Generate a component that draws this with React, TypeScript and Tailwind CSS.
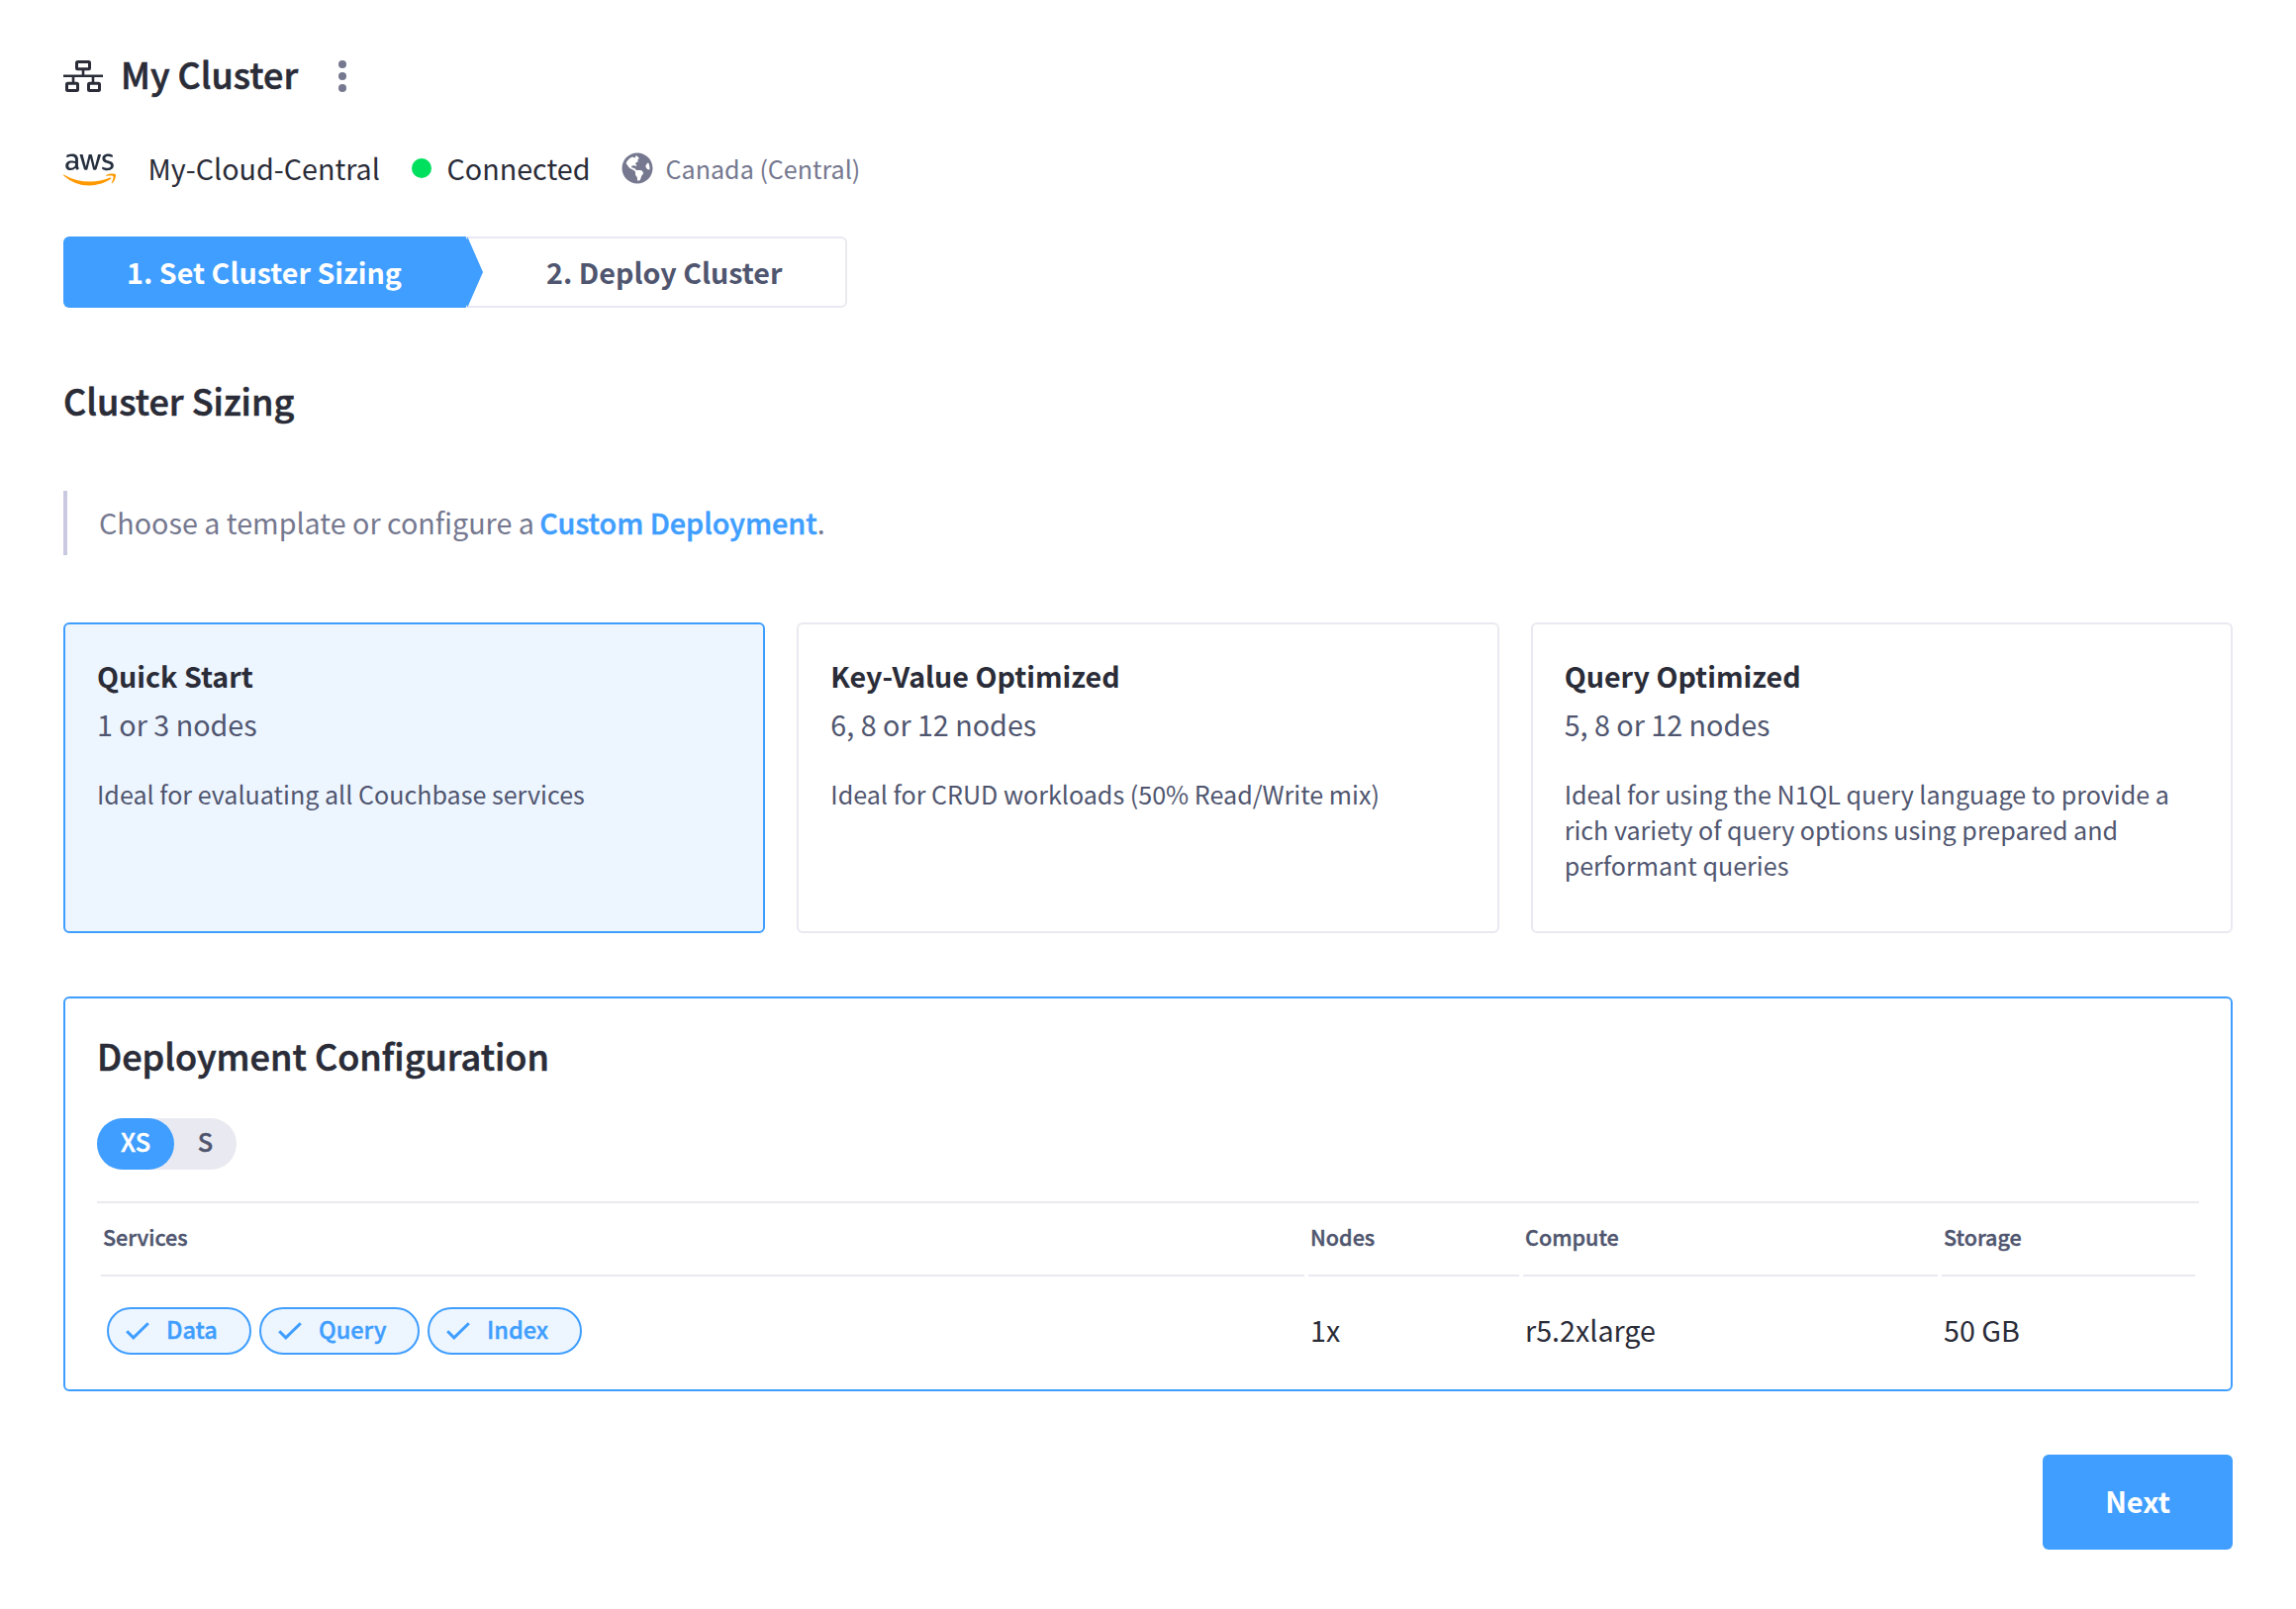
import { FaAws, FaGlobeAmericas } from "react-icons/fa";

const templates = [
  {
    name: "Quick Start",
    nodes: "1 or 3 nodes",
    text: "Ideal for evaluating all Couchbase services",
    selected: true,
  },
  {
    name: "Key-Value Optimized",
    nodes: "6, 8 or 12 nodes",
    text: "Ideal for CRUD workloads (50% Read/Write mix)",
    selected: false,
  },
  {
    name: "Query Optimized",
    nodes: "5, 8 or 12 nodes",
    text: "Ideal for using the N1QL query language to provide a rich variety of query options using prepared and performant queries",
    selected: false,
  },
];

const services = [
  { name: "Data", width: "w-[146px]" },
  { name: "Query", width: "w-[162px]" },
  { name: "Index", width: "w-[156px]" },
];

function ClusterIcon() {
  return (
    <svg width="40" height="32" viewBox="0 0 40 32" fill="none" stroke="#2a2c38" className="mt-1.5">
      <path d="M0 15.8h40" strokeWidth="2.4" />
      <path d="M20 9v6.6M10 15.6V23M30 15.6V23" strokeWidth="2.6" />
      <rect x="13.5" y="1.5" width="13" height="7.2" rx="1" strokeWidth="3" />
      <rect x="3.5" y="23.3" width="11" height="7.2" rx="1" strokeWidth="3" />
      <rect x="25.5" y="23.3" width="11" height="7.2" rx="1" strokeWidth="3" />
    </svg>
  );
}

function AwsLogo() {
  return (
    <>
      <svg width="0" height="0" className="absolute">
        <linearGradient id="aws-fill" gradientUnits="userSpaceOnUse" x1="0" y1="0" x2="0" y2="512">
          <stop offset="0.547" stopColor="#252f3e" />
          <stop offset="0.547" stopColor="#ff9900" />
        </linearGradient>
      </svg>
      <FaAws size={53} fill="url(#aws-fill)" className="mt-1 shrink-0" />
    </>
  );
}

function Check() {
  return (
    <svg width="24" height="18" viewBox="0 0 24 18" fill="none" stroke="#3f9eff" strokeWidth="3">
      <path d="M1.2 9.2 7.8 15.8 22.8 1.2" strokeLinejoin="miter" />
    </svg>
  );
}

function Stepper() {
  return (
    <div className="mt-11 flex h-[72px] w-[792px] text-[28.7px] font-bold leading-[71px]">
      <div className="w-[406px] rounded-l-md bg-[#3f9eff] pl-16 text-white">1. Set Cluster Sizing</div>
      <div className="relative flex-1 rounded-r-md border-2 border-l-0 border-[#e9e9f1] pl-[82px] leading-[67px] text-[#50566f]">
        <svg className="absolute -left-px -top-0.5" width="19" height="72" viewBox="0 0 19 72">
          <path d="M0 0H1.6L2.4 3 3.4 .5 19 36 3.4 71.5 2.4 69 1.6 72H0z" fill="#3f9eff" />
        </svg>
        2. Deploy Cluster
      </div>
    </div>
  );
}

export default function App() {
  return (
    <div className="min-h-[1626px] w-[2320px] bg-white px-16 pt-11 font-['Noto_Sans_CJK_SC','Source_Sans_Pro',sans-serif] text-[28.7px] text-[#2a2c38]">
      <header className="flex h-[60px] items-center">
        <ClusterIcon />
        <h1 className="ml-[18px] w-[220px] whitespace-nowrap text-[36px] font-medium leading-[60px] [-webkit-text-stroke:0.6px]">
          My Cluster
        </h1>
        <svg width="8" height="32" viewBox="0 0 8 32" fill="#75788f" className="mt-1.5">
          <circle cx="4" cy="4.1" r="4" />
          <circle cx="4" cy="16" r="4" />
          <circle cx="4" cy="27.9" r="4" />
        </svg>
      </header>

      <div className="mt-10 flex h-[51px] items-center leading-[51px]">
        <AwsLogo />
        <span className="ml-8 w-[267px] pl-[0.5px]">My-Cloud-Central</span>
        <span className="mr-[15px] mt-px size-5 rounded-full bg-[#00e05f]" />
        <span className="w-[177px] pl-[0.5px]">Connected</span>
        <FaGlobeAmericas size={32} className="text-[#75788f]" />
        <span className="ml-3 mt-0.5 pl-[0.5px] text-[25.1px] text-[#75788f]">Canada (Central)</span>
      </div>

      <Stepper />

      <h2 className="mt-[63px] text-[36px] font-medium leading-[60px] [-webkit-text-stroke:0.6px]">Cluster Sizing</h2>

      <p className="mt-[62px] h-[65px] border-l-4 border-[#c9c9e1] pl-8 leading-[63px] text-[#75788f]">
        Choose a template or configure a{" "}
        <a className="-ml-px text-[28.75px] font-medium text-[#3f9eff] [-webkit-text-stroke:0.5px]">Custom Deployment</a>.
      </p>

      <div className="mt-[68px] grid h-[314px] grid-cols-3 gap-8">
        {templates.map((t) => (
          <div
            key={t.name}
            className={
              t.selected
                ? "rounded-md border-2 border-[#3f9eff] bg-[#edf5ff] px-8 pt-[27px]"
                : "rounded-md border-2 border-[#e9e9f1] px-8 pt-[27px]"
            }
          >
            <h3 className="text-[28.65px] font-bold leading-[49px]">{t.name}</h3>
            <p className="leading-[49px] text-[#50566f]">{t.nodes}</p>
            <p className="mt-7 text-[25.1px] leading-9 text-[#50566f]">{t.text}</p>
          </div>
        ))}
      </div>

      <section className="mt-16 h-[399px] rounded-md border-2 border-[#3f9eff] px-8 pt-[27px]">
        <h2 className="text-[36.05px] font-medium leading-[60px] [-webkit-text-stroke:0.6px]">Deployment Configuration</h2>
        <div className="mt-[34px] flex h-[52px] w-[141px] rounded-full bg-[#e9e9f1] text-center text-[25.3px] font-medium leading-[46px] [-webkit-text-stroke:0.4px]">
          <span className="w-[78px] rounded-full bg-[#3f9eff] text-white">XS</span>
          <span className="flex-1 text-[#50566f]">S</span>
        </div>
        <div className="mt-8 border-t-2 border-[#e9e9f1] px-1">
          <div className="grid grid-cols-[1216px_213px_419px_256px] gap-x-1 text-[21.55px] font-medium leading-[67px] text-[#50566f] [-webkit-text-stroke:0.4px]">
            {["Services", "Nodes", "Compute", "Storage"].map((h) => (
              <div key={h} className="h-[74px] border-b-2 border-[#e9e9f1] pl-0.5">
                {h}
              </div>
            ))}
          </div>
          <div className="grid grid-cols-[1216px_213px_419px_256px] gap-x-1 pt-[29px] leading-[49px]">
            <div className="mt-0.5 flex gap-2 pl-1.5">
              {services.map((s) => (
                <div
                  key={s.name}
                  className={`${s.width} flex h-12 items-start rounded-full border-2 border-[#3f9eff] bg-[#edf5ff] pl-[17px] text-[23.5px] font-medium leading-10 text-[#3f9eff] [-webkit-text-stroke:0.4px]`}
                >
                  <span className="mt-[13px]">
                    <Check />
                  </span>
                  <span className="ml-[17px]">{s.name}</span>
                </div>
              ))}
            </div>
            <div className="pl-0.5">1x</div>
            <div className="pl-0.5">r5.2xlarge</div>
            <div className="pl-0.5">50 GB</div>
          </div>
        </div>
      </section>

      <div className="mt-16 flex justify-end">
        <button className="h-24 w-48 rounded-md bg-[#3f9eff] pb-[3px] text-[29px] font-bold leading-[93px] text-white">
          Next
        </button>
      </div>
    </div>
  );
}
